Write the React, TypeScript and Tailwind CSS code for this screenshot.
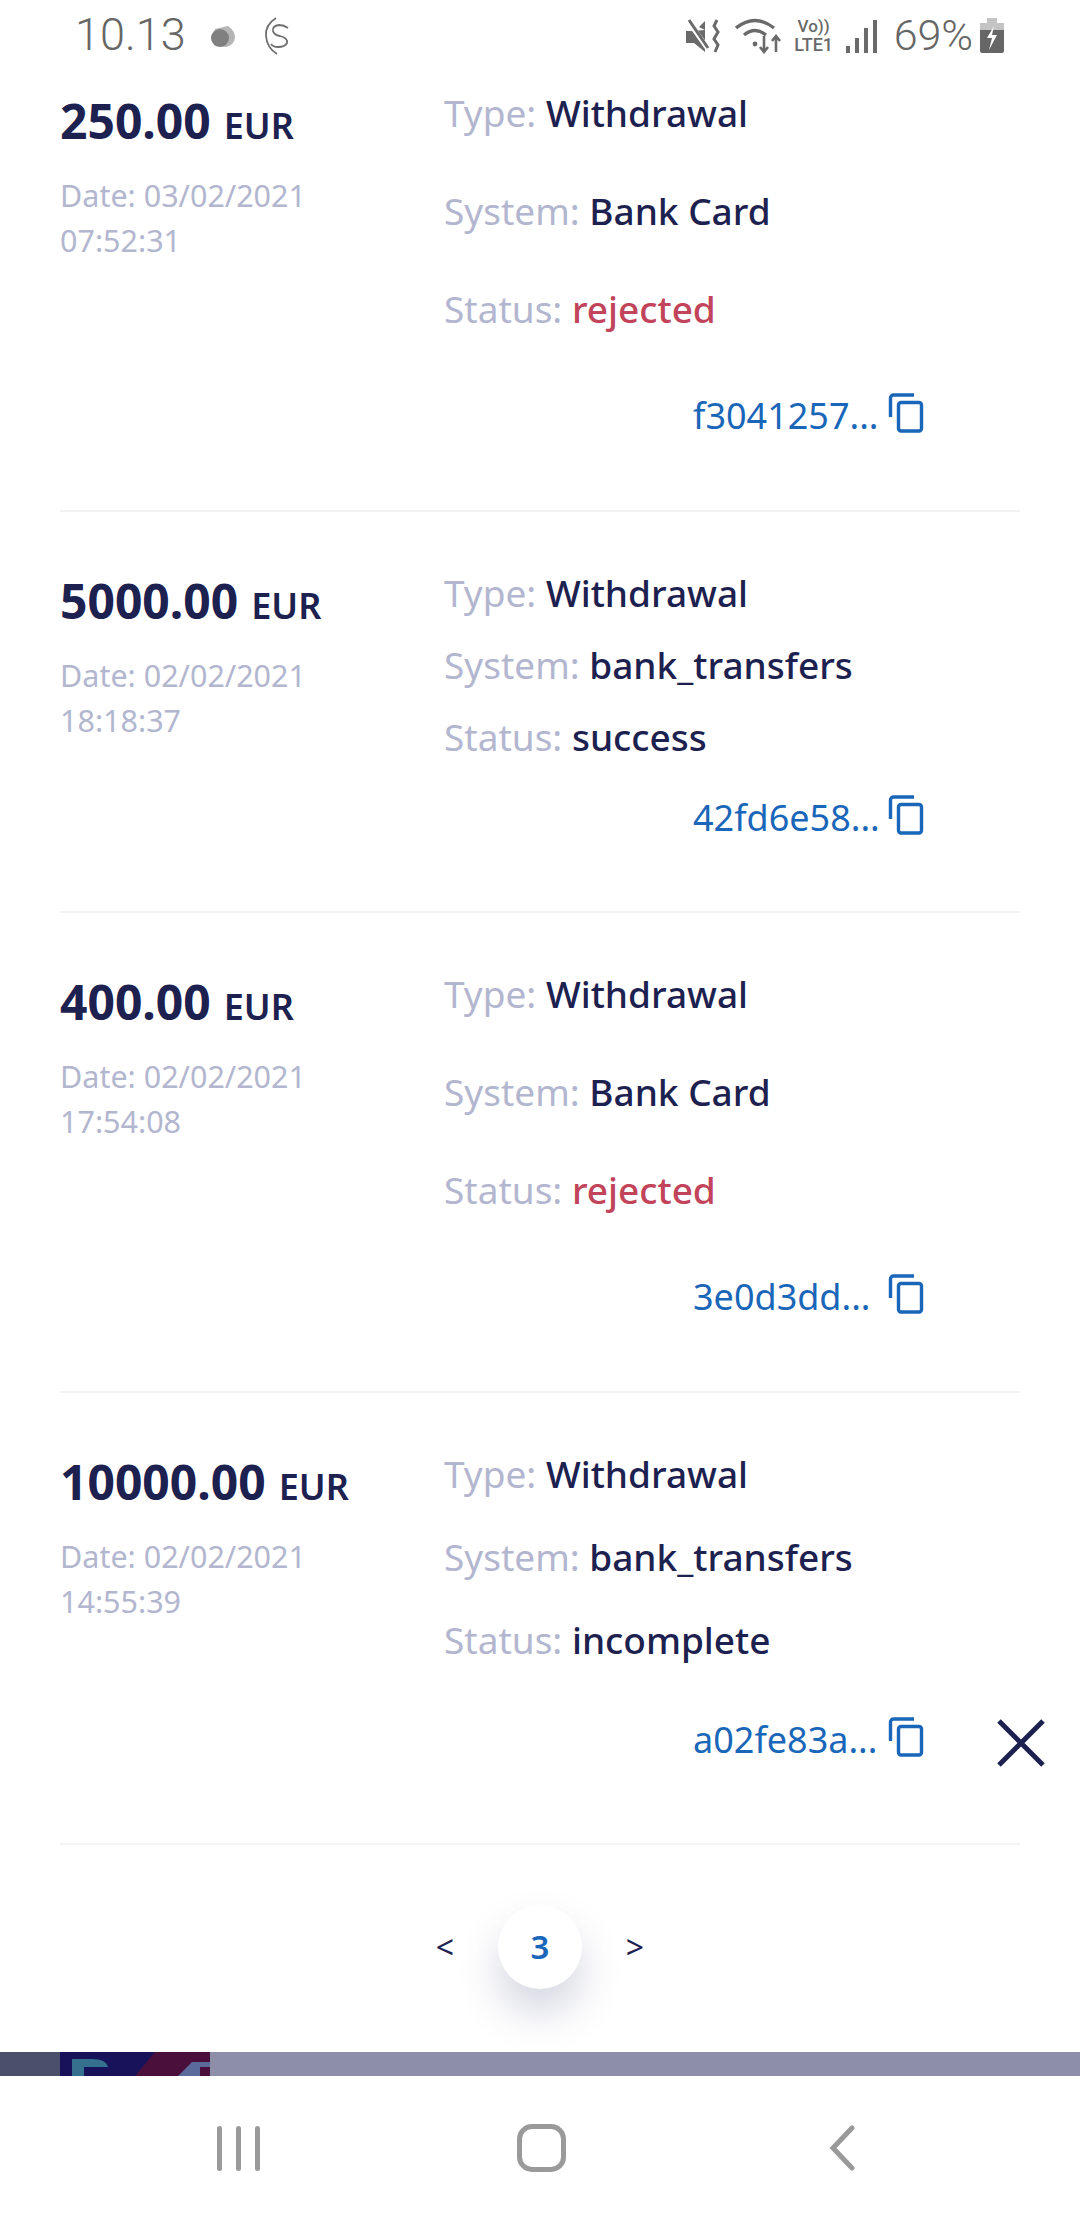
const rows = [
  {
    amount: "250.00", date: "03/02/2021", time: "07:52:31", system: "Bank Card", status: "rejected", hash: "f3041257...",
    wrap: "pb-[69px]", gap: "gap-[48px]", hashGap: "mt-[57px]",
  },
  {
    amount: "5000.00", date: "02/02/2021", time: "18:18:37", system: "bank_transfers", status: "success", hash: "42fd6e58...",
    wrap: "pt-[56px] pb-[68px]", gap: "gap-[22px]", hashGap: "mt-[31px]",
  },
  {
    amount: "400.00", date: "02/02/2021", time: "17:54:08", system: "Bank Card", status: "rejected", hash: "3e0d3dd...",
    wrap: "pt-[56px] pb-[69px]", gap: "gap-[48px]", hashGap: "mt-[57px]",
  },
  {
    amount: "10000.00", date: "02/02/2021", time: "14:55:39", system: "bank_transfers", status: "incomplete", hash: "a02fe83a...",
    wrap: "pt-[56px] pb-[78px]", gap: "gap-[33px]", hashGap: "mt-[50px]",
  },
];

function CopyIcon() {
  return (
    <svg width="36" height="40" viewBox="0 0 36 40" fill="none" stroke="#1a66b8" strokeWidth="3.4" className="-mt-[6px]">
      <path d="M2.5 24V5a3 3 0 0 1 3-3H26" />
      <rect x="10.5" y="9.5" width="23" height="28.5" rx="2.5" />
    </svg>
  );
}

function StatusBar() {
  return (
    <div className="flex h-[88px] shrink-0 items-start pl-[75px] text-[#666666]">
      <span className="mt-[9px] font-['Roboto',sans-serif] text-[45px] leading-[52px] font-light">10.13</span>
      <svg width="30" height="24" viewBox="0 0 30 24" className="mt-[25px] ml-[22px]">
        <path d="M7 4 L20 1 Q27 6 27 13 Q26 20 18 22 L7 21 Q2 12 7 4Z" fill="#b5b5b5" />
        <circle cx="12" cy="13" r="9" fill="#808080" />
      </svg>
      <svg width="28" height="38" viewBox="0 0 28 38" fill="none" stroke="#707070" strokeWidth="1.8" className="mt-[17px] ml-[26px]">
        <path d="M12 1 Q1 8 2 19 Q3 31 13 37" />
        <path d="M24 11 Q20 8 15 8 Q8 9 9 14 Q10 18 16 19 Q24 21 23 26 Q21 30 14 30 Q9 30 7 27" />
      </svg>
      <svg width="36" height="36" viewBox="0 0 36 36" className="mt-[18px] ml-[394px]" fill="#6a6a6a">
        <path d="M0 13h6l13-1v22L8 25H0z" />
        <path d="M13 9l6-6v9z" />
        <path d="M2 3l20 28" stroke="#ffffff" strokeWidth="5" />
        <path d="M3 2l19 28" stroke="#6a6a6a" strokeWidth="3" />
        <path d="M31 2l-3 6 4 6-4 7 4 6-3 7" fill="none" stroke="#6a6a6a" strokeWidth="3" />
      </svg>
      <svg width="48" height="36" viewBox="0 0 48 36" fill="none" stroke="#6a6a6a" strokeWidth="3.4" className="mt-[18px] ml-[13px]">
        <path d="M1 10 Q20 -5 39 10" />
        <path d="M9 17 Q20 8 31 17" />
        <circle cx="20" cy="26" r="2.4" fill="#6a6a6a" stroke="none" />
        <path d="M29 18v16M25 29l4 5 4-5" strokeWidth="2.6" />
        <path d="M41 34V18M37 23l4-5 4 5" strokeWidth="2.6" />
      </svg>
      <div className="mt-[17px] ml-[10px] flex w-[42px] flex-col items-center font-['Roboto',sans-serif] text-[#6a6a6a]">
        <span className="text-[17px] leading-[19px] font-medium">Vo))</span>
        <span className="text-[18px] leading-[18px] font-medium">LTE1</span>
      </div>
      <div className="mt-[20px] ml-[11px] flex h-[33px] items-end gap-[5px]">
        <div className="h-[7px] w-[4px] bg-[#6a6a6a]" />
        <div className="h-[15px] w-[4px] bg-[#6a6a6a]" />
        <div className="h-[25px] w-[4px] bg-[#6a6a6a]" />
        <div className="h-[33px] w-[4px] bg-[#6a6a6a]" />
      </div>
      <span className="mt-[11px] ml-[17px] font-['Roboto',sans-serif] text-[43px] leading-[48px] font-light">69%</span>
      <svg width="24" height="35" viewBox="0 0 24 35" className="mt-[18px] ml-[7px]">
        <path d="M7 0h10v5h7v7H0V5h7z" fill="#c4c4c4" />
        <path d="M0 12h24v21a2 2 0 0 1-2 2H2a2 2 0 0 1-2-2z" fill="#666666" />
        <path d="M14 8L7 20h5l-3 12 8-15h-5z" fill="#ffffff" />
      </svg>
    </div>
  );
}

function TxRow({ row }: { row: (typeof rows)[number] }) {
  const statusColor = row.status === "rejected" ? "text-[#c2445a] font-medium" : "text-[#1d2150] font-medium";
  return (
    <div className={`flex border-b-2 border-[#f3f3f5] ${row.wrap}`}>
      <div className="w-[384px] shrink-0">
        <div className="mt-[3px] text-[#1d2150] font-bold">
          <span className="text-[48px] leading-[60px]">{row.amount}</span>
          <span className="ml-[13px] text-[36px] leading-[60px] font-semibold">EUR</span>
        </div>
        <div className="mt-[17px] text-[30.5px] leading-[45px] text-[#b3b6cf]">
          <div>Date: {row.date}</div>
          <div>{row.time}</div>
        </div>
      </div>
      <div className="flex-1 text-[37px] leading-[50px] text-[#b3b6cf]">
        <div className={`flex flex-col ${row.gap}`}>
          <div>Type: <span className="font-medium text-[#1d2150]">Withdrawal</span></div>
          <div>System: <span className="font-medium text-[#1d2150]">{row.system}</span></div>
          <div>Status: <span className={statusColor}>{row.status}</span></div>
        </div>
        <div className={`flex items-center pl-[249px] ${row.hashGap}`}>
          <span className="w-[195px] whitespace-nowrap text-[36px] text-[#1a66b8]">{row.hash}</span>
          <CopyIcon />
        </div>
      </div>
    </div>
  );
}

export default function App() {
  return (
    <div className="relative flex h-[2220px] w-[1080px] flex-col overflow-hidden bg-white font-['Noto_Sans',sans-serif]">
      <StatusBar />

      <div className="mx-[60px]">
        {rows.map((row) => (
          <TxRow key={row.hash} row={row} />
        ))}
      </div>

      {/* Close button over the last row */}
      <svg width="48" height="48" viewBox="0 0 48 48" stroke="#1d2150" strokeWidth="5" className="absolute top-[1719px] left-[997px]">
        <path d="M2 2l44 44M46 2L2 46" />
      </svg>

      {/* Pagination */}
      <div className="flex flex-1 items-start justify-center pt-[60px] text-[#1d2150]">
        <span className="w-[106px] text-center text-[32px] leading-[84px]">&lt;</span>
        <div className="flex h-[84px] w-[84px] items-center justify-center rounded-full bg-white text-[33px] font-semibold text-[#1a66b8] shadow-[0_24px_40px_rgba(70,75,120,0.22)]">
          3
        </div>
        <span className="w-[106px] text-center text-[32px] leading-[84px]">&gt;</span>
      </div>

      {/* Ad strip, dimmed */}
      <div className="flex h-[24px] shrink-0 bg-[#8d8fa8]">
        <div className="w-[60px] bg-[#4a4f6b]" />
        <svg width="150" height="24" viewBox="0 0 150 24">
          <rect width="150" height="24" fill="#17125a" />
          <path d="M95 0h55v24H75z" fill="#4a0f3a" />
          <path d="M12 7h20q14 0 16 8H24v9H12z" fill="#35708f" />
          <path d="M118 24l14-14h18v5h-10v9z" fill="#5a6a9a" />
        </svg>
      </div>

      {/* Android nav */}
      <div className="flex h-[144px] shrink-0 items-center justify-between pr-[225px] pl-[217px]">
        <div className="flex h-[45px] gap-[14px]">
          <div className="w-[5px] rounded-full bg-[#9a9a9a]" />
          <div className="w-[5px] rounded-full bg-[#9a9a9a]" />
          <div className="w-[5px] rounded-full bg-[#9a9a9a]" />
        </div>
        <div className="mr-[6px] h-[48px] w-[49px] rounded-[15px] border-[5px] border-[#9a9a9a]" />
        <svg width="26" height="46" viewBox="0 0 26 46" fill="none" stroke="#9a9a9a" strokeWidth="5" strokeLinecap="round">
          <path d="M23 3L4 23l19 20" />
        </svg>
      </div>
    </div>
  );
}
